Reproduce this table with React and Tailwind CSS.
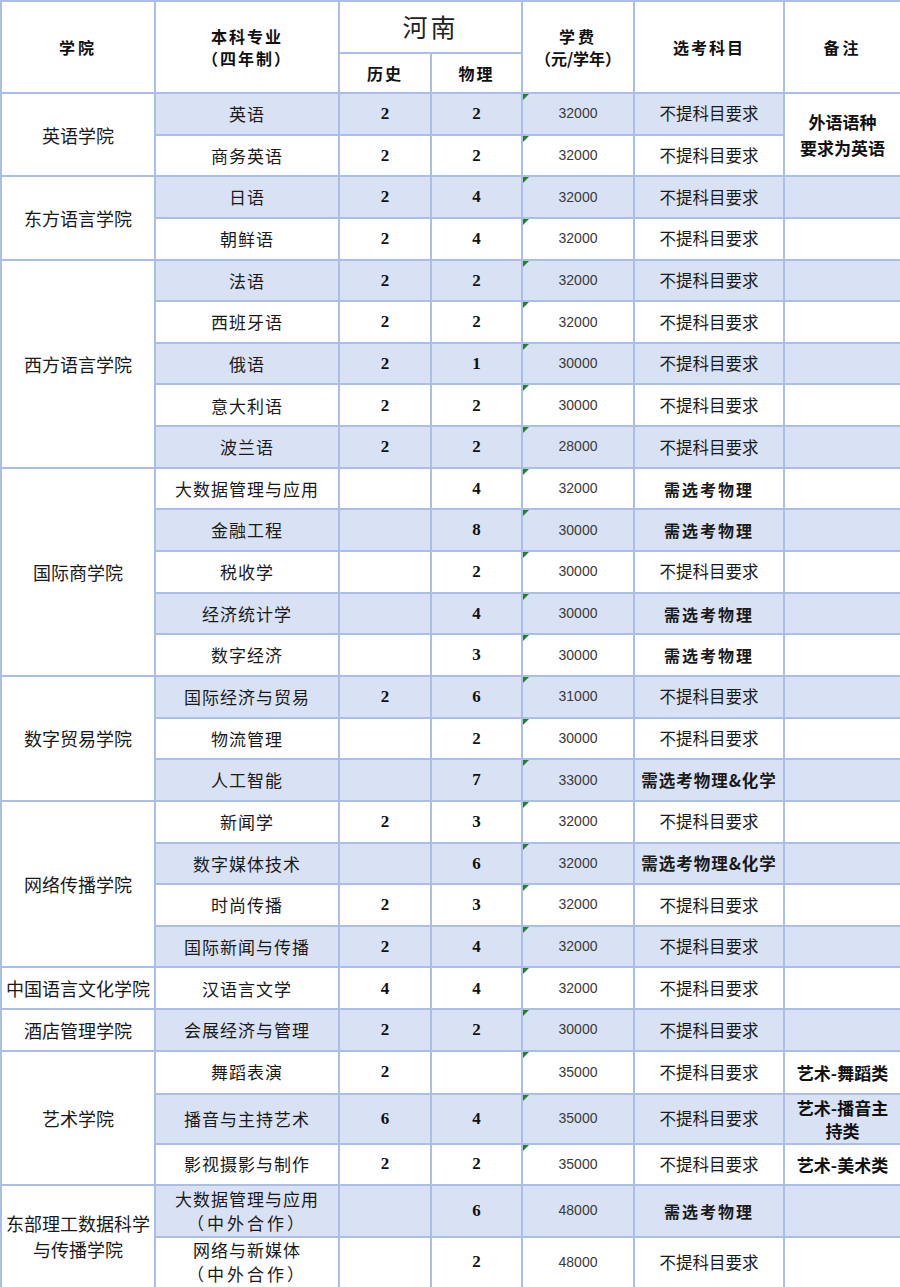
import React from 'react';

const BASE = '不提科目要求';
const PHY = '需选考物理';
const PHYCHEM = '需选考物理&化学';

const colleges = [
  {
    name: '英语学院',
    note: ['外语语种', '要求为英语'],
    rows: [
      ['英语', '2', '2', '32000', BASE],
      ['商务英语', '2', '2', '32000', BASE],
    ],
  },
  {
    name: '东方语言学院',
    rows: [
      ['日语', '2', '4', '32000', BASE],
      ['朝鲜语', '2', '4', '32000', BASE],
    ],
  },
  {
    name: '西方语言学院',
    rows: [
      ['法语', '2', '2', '32000', BASE],
      ['西班牙语', '2', '2', '32000', BASE],
      ['俄语', '2', '1', '30000', BASE],
      ['意大利语', '2', '2', '30000', BASE],
      ['波兰语', '2', '2', '28000', BASE],
    ],
  },
  {
    name: '国际商学院',
    rows: [
      ['大数据管理与应用', '', '4', '32000', PHY],
      ['金融工程', '', '8', '30000', PHY],
      ['税收学', '', '2', '30000', BASE],
      ['经济统计学', '', '4', '30000', PHY],
      ['数字经济', '', '3', '30000', PHY],
    ],
  },
  {
    name: '数字贸易学院',
    rows: [
      ['国际经济与贸易', '2', '6', '31000', BASE],
      ['物流管理', '', '2', '30000', BASE],
      ['人工智能', '', '7', '33000', PHYCHEM],
    ],
  },
  {
    name: '网络传播学院',
    rows: [
      ['新闻学', '2', '3', '32000', BASE],
      ['数字媒体技术', '', '6', '32000', PHYCHEM],
      ['时尚传播', '2', '3', '32000', BASE],
      ['国际新闻与传播', '2', '4', '32000', BASE],
    ],
  },
  {
    name: '中国语言文化学院',
    rows: [['汉语言文学', '4', '4', '32000', BASE]],
  },
  {
    name: '酒店管理学院',
    rows: [['会展经济与管理', '2', '2', '30000', BASE]],
  },
  {
    name: '艺术学院',
    rows: [
      ['舞蹈表演', '2', '', '35000', BASE, ['艺术-舞蹈类']],
      ['播音与主持艺术', '6', '4', '35000', BASE, ['艺术-播音主', '持类']],
      ['影视摄影与制作', '2', '2', '35000', BASE, ['艺术-美术类']],
    ],
  },
  {
    name: ['东部理工数据科学', '与传播学院'],
    rows: [
      [['大数据管理与应用', '（中外合作）'], '', '6', '48000', PHY, null, true],
      [['网络与新媒体', '（中外合作）'], '', '2', '48000', BASE, null, true],
    ],
  },
];

const spans = { 1: 'row-span-1', 2: 'row-span-2', 3: 'row-span-3', 4: 'row-span-4', 5: 'row-span-5' };

const Cell = ({ children, className = '' }) => (
  <div className={`relative flex flex-col items-center justify-center text-center border-b-2 border-r-2 border-[#a9bfea] ${className}`}>
    {children}
  </div>
);

const Lines = ({ value }) =>
  Array.isArray(value) ? value.map((l, i) => <span key={i} className="block leading-[26px]">{l}</span>) : value;

const App = () => {
  let idx = 0;
  const cells = [];

  colleges.forEach((c, ci) => {
    cells.push(
      <Cell key={`c${ci}`} className={`${spans[c.rows.length]} bg-white text-[18px] text-[#1a1a1a] leading-[26px]`}>
        <Lines value={c.name} />
      </Cell>
    );
    c.rows.forEach((r, ri) => {
      const [major, hist, phys, fee, req, note, noFlag] = r;
      const shade = idx % 2 === 0 ? 'bg-[#d9e2f4]' : 'bg-white';
      const k = `${ci}-${ri}`;
      cells.push(
        <Cell key={`m${k}`} className={`${shade} text-[17px] text-[#1a1a1a]`}>
          {Array.isArray(major) ? (
            <>
              <span className="block leading-[24px] tracking-[1px]">{major[0]}</span>
              <span className="block leading-[24px] tracking-[3px]">{major[1]}</span>
            </>
          ) : (
            <span className="tracking-[1px]">{major}</span>
          )}
        </Cell>,
        <Cell key={`h${k}`} className={`${shade} font-['Liberation_Serif',serif] font-bold text-[17px] text-[#111]`}>{hist}</Cell>,
        <Cell key={`p${k}`} className={`${shade} font-['Liberation_Serif',serif] font-bold text-[17px] text-[#111]`}>{phys}</Cell>,
        <Cell key={`f${k}`} className={`${shade} font-['Liberation_Sans',sans-serif] text-[14px] text-[#3a3a3a]`}>
          {!noFlag && (
            <span className="absolute left-0 top-0 h-0 w-0 border-t-[6px] border-r-[6px] border-t-[#178a17] border-r-transparent" />
          )}
          {fee}
        </Cell>,
        <Cell
          key={`r${k}`}
          className={`${shade} whitespace-nowrap text-[#1a1a1a] ${req === BASE ? 'text-[16.5px]' : req === PHY ? 'text-[16px] font-bold tracking-[2px]' : 'font-bold tracking-[1px] text-[16.5px]'}`}
        >
          {req}
        </Cell>
      );
      if (c.note && ri === 0) {
        cells.push(
          <Cell key={`n${k}`} className={`${spans[c.rows.length]} border-r-0 bg-white text-[17px] font-bold text-[#111]`}>
            <Lines value={c.note} />
          </Cell>
        );
      } else if (!c.note) {
        cells.push(
          <Cell key={`n${k}`} className={`${shade} border-r-0 whitespace-nowrap text-[17px] font-bold text-[#111]`}>
            {note && note.map((l, i) => <span key={i} className="block leading-[23px]">{l}</span>)}
          </Cell>
        );
      }
      idx++;
    });
  });

  return (
    <div className="w-[900px] bg-white font-['Noto_Sans_CJK_SC',sans-serif]">
      <div className="grid grid-cols-[154px_184px_92px_91px_112px_150px_117px] grid-rows-[52px_40px_repeat(23,41.65px)_43px_50px_41px_52px_51px] border-l-2 border-t-2 border-[#a9bfea] overflow-hidden">
        {/* header */}
        <Cell className="row-span-2 text-[16px] font-bold tracking-[3px] text-[#111]">学院</Cell>
        <Cell className="row-span-2 text-[16px] font-bold tracking-[2px] text-[#111] leading-[22px]">
          <span className="block">本科专业</span>
          <span className="block">（四年制）</span>
        </Cell>
        <Cell className="col-span-2 text-[25px] tracking-[3px] text-[#222]">河南</Cell>
        <Cell className="row-span-2 text-[16px] font-bold text-[#111] leading-[22px]">
          <span className="block tracking-[3px]">学费</span>
          <span className="block">（元/学年）</span>
        </Cell>
        <Cell className="row-span-2 text-[16px] font-bold tracking-[2px] text-[#111]">选考科目</Cell>
        <Cell className="row-span-2 border-r-0 text-[16px] font-bold tracking-[3px] text-[#111]">备注</Cell>
        <Cell className="text-[16px] font-bold tracking-[2px] text-[#111]">历史</Cell>
        <Cell className="text-[16px] font-bold tracking-[2px] text-[#111]">物理</Cell>
        {cells}
      </div>
    </div>
  );
};

export default App;
